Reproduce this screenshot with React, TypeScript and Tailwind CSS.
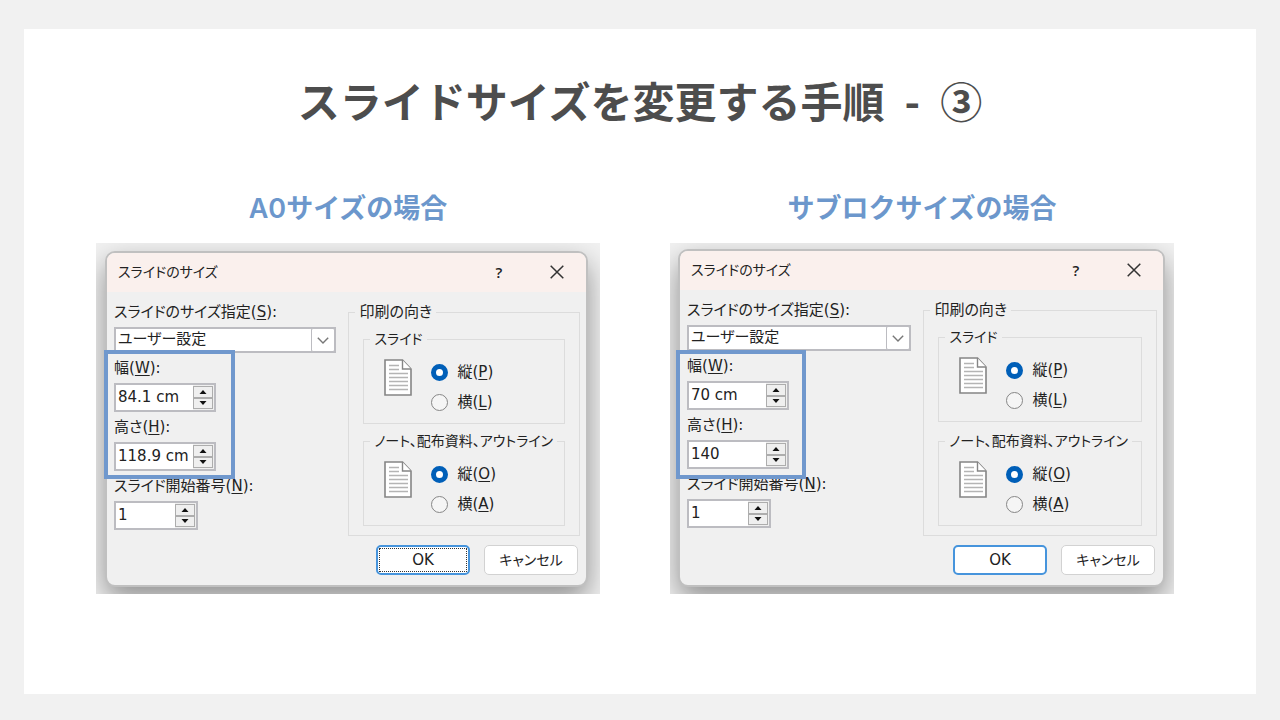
import { useId, useState } from "react";
import type { ReactNode } from "react";
import clsx from "clsx";

interface DialogConfig {
  heading: string;
  width: string;
  height: string;
  okFocused: boolean;
  frameClass: string;
  groupGapClass: string;
  highlightClass: string;
}

const dialogs: DialogConfig[] = [
  {
    heading: "A0サイズの場合",
    width: "84.1 cm",
    height: "118.9 cm",
    okFocused: true,
    frameClass: "pt-2 pr-3 pb-[7px] pl-[9px]",
    groupGapClass: "gap-[6px]",
    highlightClass: "-top-[7px] -left-[10px] h-[129px] w-[131px]",
  },
  {
    heading: "サブロクサイズの場合",
    width: "70 cm",
    height: "140",
    okFocused: false,
    frameClass: "pt-[6px] pr-[9px] pb-[7px] pl-2",
    groupGapClass: "gap-[8px]",
    highlightClass: "-top-[5px] -left-[11px] h-[129px] w-[130px]",
  },
];

function AccessKey({ children }: { children: ReactNode }) {
  return <u className="underline-offset-2">{children}</u>;
}

function PageIcon() {
  return (
    <svg width="28" height="37" viewBox="0 0 28 37" fill="none" className="mt-[2px] shrink-0">
      <path d="M1 1H18.5L27 10V36H1Z" fill="#fff" stroke="#858585" strokeWidth="1.6" />
      <path d="M18.5 1V10H27" fill="#fff" stroke="#858585" strokeWidth="1.4" />
      <path
        d="M5 6.5H15M5 10.5H15M5 14.5H24M5 18.5H24M5 22.5H24M5 26.5H24M5 30.5H24"
        stroke="#b4b4b4"
        strokeWidth="1.3"
      />
    </svg>
  );
}

interface SpinnerProps {
  label: string;
  accessKey: string;
  initial: string;
  boxClass: string;
}

function SpinnerField({ label, accessKey, initial, boxClass }: SpinnerProps) {
  const id = useId();
  const [value, setValue] = useState(initial);

  const step = (delta: number) => {
    const unit = value.endsWith(" cm") ? " cm" : "";
    const next = Math.round((parseFloat(value) + delta) * 10) / 10;
    setValue(`${next}${unit}`);
  };

  return (
    <div className="flex flex-col gap-1">
      <label htmlFor={id} className="h-[22px] whitespace-nowrap">
        {label}(<AccessKey>{accessKey}</AccessKey>):
      </label>
      <div className={clsx("flex h-[29px] border-2 border-[#bcbcc1] bg-white", boxClass)}>
        <input
          id={id}
          value={value}
          onChange={(e) => setValue(e.target.value)}
          className="min-w-0 flex-1 pb-[2px] pl-[2px] outline-none"
        />
        <div className="flex w-[21px] flex-col bg-[#efefef] py-px pr-px">
          <button
            type="button"
            aria-label={`${label}を増やす`}
            onClick={() => step(1)}
            className="flex flex-1 items-center justify-center border border-[#adadad]"
          >
            <svg width="8" height="4" viewBox="0 0 8 4">
              <path d="M0.5 4L4 0L7.5 4Z" fill="#111" />
            </svg>
          </button>
          <button
            type="button"
            aria-label={`${label}を減らす`}
            onClick={() => step(-1)}
            className="flex flex-1 items-center justify-center border border-[#adadad]"
          >
            <svg width="8" height="4" viewBox="0 0 8 4">
              <path d="M0.5 0L4 4L7.5 0Z" fill="#111" />
            </svg>
          </button>
        </div>
      </div>
    </div>
  );
}

interface OrientationProps {
  legend: string;
  portraitKey: string;
  landscapeKey: string;
}

function OrientationGroup({ legend, portraitKey, landscapeKey }: OrientationProps) {
  const name = useId();
  const options = [
    { text: "縦", key: portraitKey },
    { text: "横", key: landscapeKey },
  ];

  return (
    <fieldset className="min-w-0 border border-[#dcdcdc] pb-[6px] pl-5">
      <legend className="-ml-[14px] h-[22px] px-1 text-[14px] leading-[22px] whitespace-nowrap">{legend}</legend>
      <div className="flex gap-[19px] pt-[7px]">
        <PageIcon />
        <div>
          {options.map((option, i) => (
            <label key={option.key} className="flex h-[30px] items-center gap-[9px]">
              <input
                type="radio"
                name={name}
                defaultChecked={i === 0}
                className="size-[17px] appearance-none rounded-full border border-[#868686] bg-[#f5f5f5] checked:border-[5px] checked:border-[#005fb8] checked:bg-white"
              />
              <span>
                {option.text}(<AccessKey>{option.key}</AccessKey>)
              </span>
            </label>
          ))}
        </div>
      </div>
    </fieldset>
  );
}

function SlideSizeDialog({ config }: { config: DialogConfig }) {
  const selectId = useId();

  return (
    <div className={clsx("flex flex-1 overflow-hidden bg-[#f1f1f1]", config.frameClass)}>
      <div
        role="dialog"
        aria-label="スライドのサイズ"
        className="flex flex-1 flex-col rounded-[10px] border-2 border-[#c0c0c0] bg-[#f0f0f0] font-['DejaVu_Sans','Noto_Sans_CJK_JP',sans-serif] text-[15px] leading-[22px] text-[#222] shadow-[0_12px_28px_rgba(0,0,0,0.4)] [font-feature-settings:'palt']"
      >
        <div className="flex h-[39px] items-center rounded-t-lg bg-[#faf0ed] pb-[2px] pl-[11px]">
          <span className="flex-1 text-[14px]">スライドのサイズ</span>
          <button type="button" aria-label="ヘルプ" className="w-[58px] font-['Open_Sans',sans-serif] font-semibold">
            ?
          </button>
          <button type="button" aria-label="閉じる" className="flex w-[58px] justify-center">
            <svg width="14" height="14" viewBox="0 0 14 14" stroke="#333" strokeWidth="1.5">
              <path d="M0.7 0.7L13.3 13.3M13.3 0.7L0.7 13.3" />
            </svg>
          </button>
        </div>

        <div className="grid grid-cols-[49fr_51fr] gap-3 pt-[9px] pr-[6px] pl-[7px]">
          <div className="flex min-w-0 flex-col gap-1">
            <div className="flex flex-col gap-1">
              <label htmlFor={selectId} className="h-[22px] whitespace-nowrap">
                スライドのサイズ指定(<AccessKey>S</AccessKey>):
              </label>
              <div className="relative h-[26px]">
                <select
                  id={selectId}
                  className="h-full w-full appearance-none border-2 border-[#bcbcc1] bg-white pb-[2px] pl-[2px] leading-5 outline-none"
                >
                  <option>ユーザー設定</option>
                </select>
                <span className="pointer-events-none absolute inset-y-px right-px flex w-6 items-center justify-center rounded-[2px] border border-[#bcbcc1] bg-white">
                  <svg width="12" height="7" viewBox="0 0 12 7" fill="none" stroke="#777" strokeWidth="1.4">
                    <path d="M0.8 0.8L6 6L11.2 0.8" />
                  </svg>
                </span>
              </div>
            </div>

            <div className="relative flex flex-col gap-1">
              <SpinnerField label="幅" accessKey="W" initial={config.width} boxClass="w-[102px]" />
              <SpinnerField label="高さ" accessKey="H" initial={config.height} boxClass="w-[102px]" />
              <div
                className={clsx(
                  "pointer-events-none absolute z-10 border-4 border-[#7098cd]",
                  config.highlightClass
                )}
              />
            </div>

            <SpinnerField label="スライド開始番号" accessKey="N" initial="1" boxClass="w-[84px]" />
          </div>

          <fieldset className="min-w-0 border border-[#dcdcdc] px-[14px] pb-[9px]">
            <legend className="-ml-2 h-[22px] px-1">印刷の向き</legend>
            <div className={clsx("flex flex-col pt-[5px]", config.groupGapClass)}>
              <OrientationGroup legend="スライド" portraitKey="P" landscapeKey="L" />
              <OrientationGroup legend="ノート、配布資料、アウトライン" portraitKey="O" landscapeKey="A" />
            </div>
          </fieldset>
        </div>

        <div className="mt-auto flex justify-end gap-[14px] pt-[9px] pr-2 pb-[10px]">
          <button
            type="button"
            className="h-[30px] w-[94px] rounded-[5px] border-2 border-[#4694dc] bg-white p-px"
          >
            <span
              className={clsx(
                "flex h-full items-center justify-center",
                config.okFocused && "border border-dotted border-[#333]"
              )}
            >
              OK
            </span>
          </button>
          <button
            type="button"
            className="h-[30px] w-[94px] rounded-[5px] border border-[#d2d2d2] bg-white text-[14px]"
          >
            キャンセル
          </button>
        </div>
      </div>
    </div>
  );
}

export default function App() {
  return (
    <div className="flex min-h-screen bg-[#f1f1f1] px-6 pt-[29px] pb-[26px]">
      <main className="flex-1 bg-white pt-[47px] pb-[100px] font-['Noto_Sans_CJK_JP',sans-serif]">
        <h1 className="flex justify-center gap-5 text-[42px] leading-[48px] font-bold text-[#4d4d4d]">
          <span>スライドサイズを変更する手順</span>
          <span>-</span>
          <span>③</span>
        </h1>
        <div className="mt-[69px] flex justify-center gap-[70px] pr-[10px]">
          {dialogs.map((config) => (
            <section key={config.heading} className="flex w-full max-w-[504px] flex-col">
              <h2 className="mb-[18px] text-center font-['Inter','Noto_Sans_CJK_JP',sans-serif] text-[27px] leading-8 font-semibold text-[#6c97cc]">
                {config.heading}
              </h2>
              <SlideSizeDialog config={config} />
            </section>
          ))}
        </div>
      </main>
    </div>
  );
}
